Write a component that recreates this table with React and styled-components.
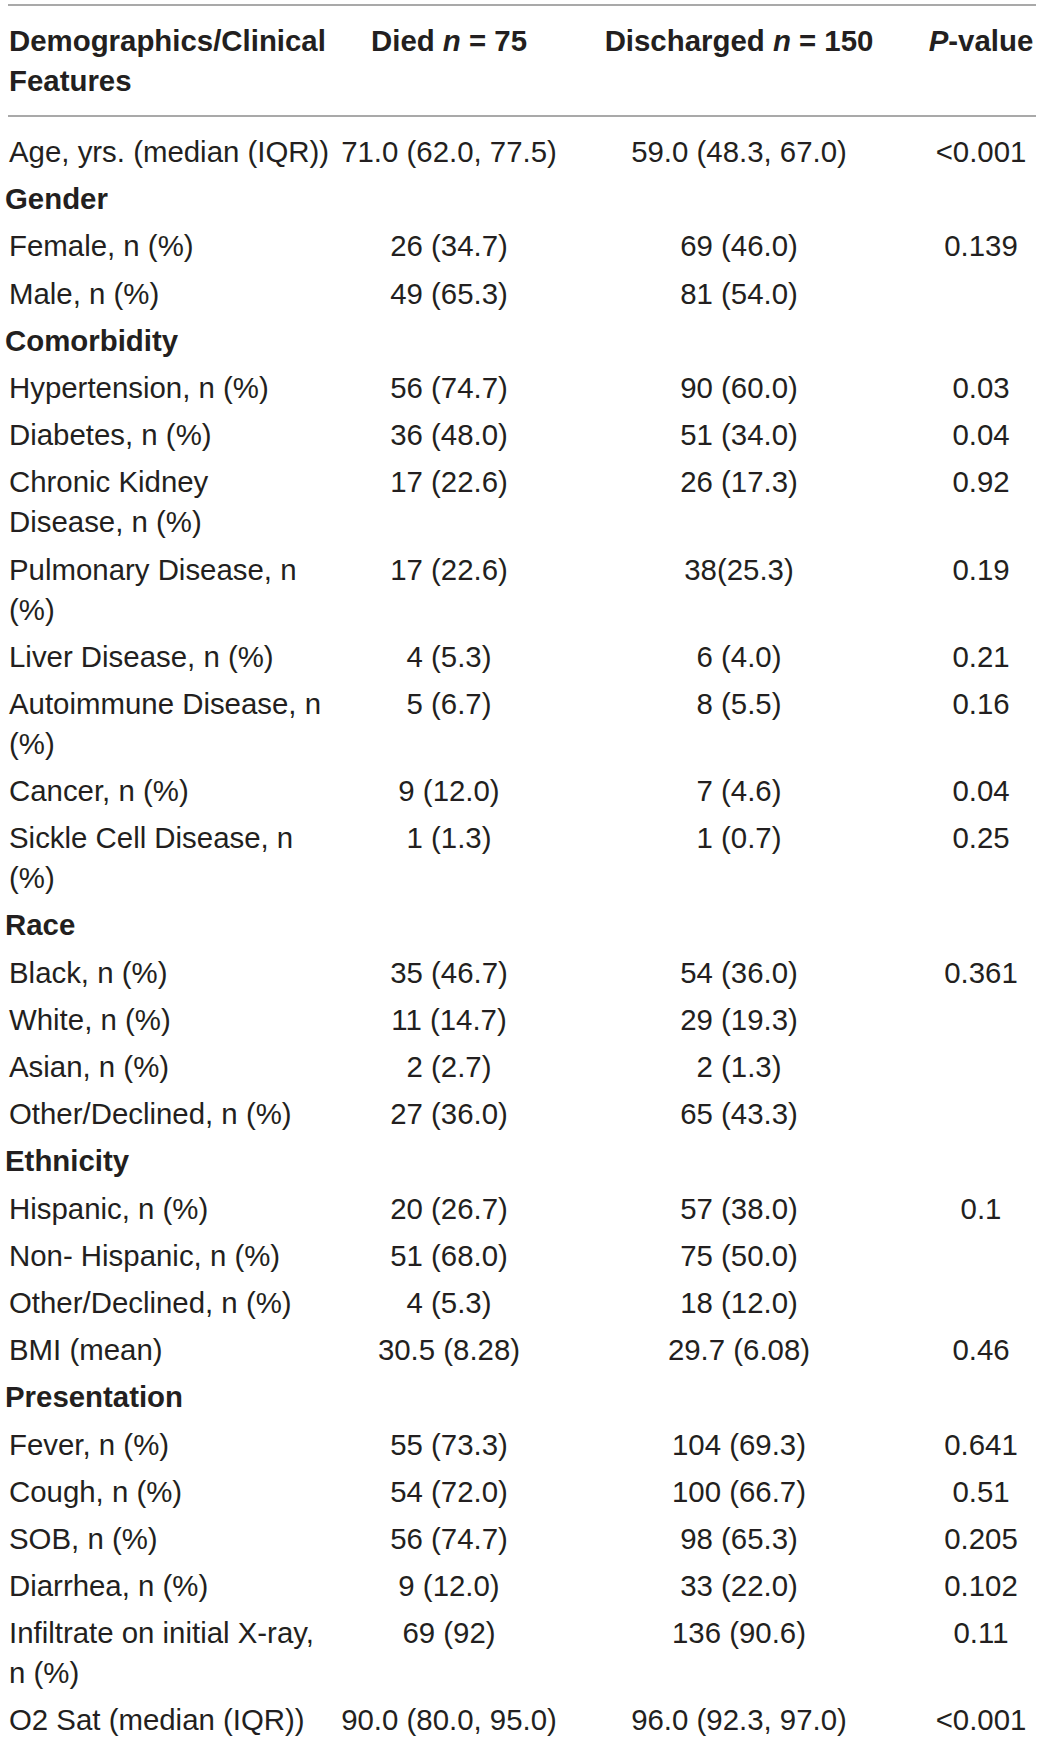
import React from "react";
import styled, { createGlobalStyle } from "styled-components";

const GlobalStyle = createGlobalStyle`
  body {
    margin: 0;
    background: #fff;
  }
`;

const Page = styled.div`
  padding: 4px 6px 0 8px;
`;

const Table = styled.table`
  width: 1028px;
  border-collapse: separate;
  border-spacing: 0;
  table-layout: fixed;
  font-family: "Liberation Sans", Arial, Helvetica, sans-serif;
  font-size: 29.4px;
  line-height: 40px;
  color: #231f20;
`;

const HeadCell = styled.th`
  font-weight: 700;
  text-align: ${(p) => (p.$left ? "left" : "center")};
  vertical-align: top;
  padding: 15px ${(p) => p.$pr || 0}px 14px ${(p) => (p.$left ? 1 : 0)}px;
  border-top: 2px solid #a9a9a9;
  border-bottom: 2px solid #a9a9a9;
  white-space: pre;
`;

const Row = styled.tr`
  &:first-child td {
    padding-top: 15px;
  }
`;

const LabelCell = styled.td`
  text-align: left;
  vertical-align: top;
  padding: 3.6px 0 3.6px 1px;
  white-space: pre;
`;

const SectionCell = styled.td`
  text-align: left;
  font-weight: 700;
  padding: 3.6px 0;
  text-indent: -3px;
  white-space: pre;
`;

const ValueCell = styled.td`
  text-align: center;
  vertical-align: top;
  padding: 3.6px ${(p) => p.$pr || 0}px 3.6px 0;
  white-space: pre;
`;

const rows = [
  ["Age, yrs. (median (IQR))", "71.0 (62.0, 77.5)", "59.0 (48.3, 67.0)", "<0.001"],
  ["Gender"],
  ["Female, n (%)", "26 (34.7)", "69 (46.0)", "0.139"],
  ["Male, n (%)", "49 (65.3)", "81 (54.0)", ""],
  ["Comorbidity"],
  ["Hypertension, n (%)", "56 (74.7)", "90 (60.0)", "0.03"],
  ["Diabetes, n (%)", "36 (48.0)", "51 (34.0)", "0.04"],
  ["Chronic Kidney\nDisease, n (%)", "17 (22.6)", "26 (17.3)", "0.92"],
  ["Pulmonary Disease, n\n(%)", "17 (22.6)", "38(25.3)", "0.19"],
  ["Liver Disease, n (%)", "4 (5.3)", "6 (4.0)", "0.21"],
  ["Autoimmune Disease, n\n(%)", "5 (6.7)", "8 (5.5)", "0.16"],
  ["Cancer, n (%)", "9 (12.0)", "7 (4.6)", "0.04"],
  ["Sickle Cell Disease, n\n(%)", "1 (1.3)", "1 (0.7)", "0.25"],
  ["Race"],
  ["Black, n (%)", "35 (46.7)", "54 (36.0)", "0.361"],
  ["White, n (%)", "11 (14.7)", "29 (19.3)", ""],
  ["Asian, n (%)", "2 (2.7)", "2 (1.3)", ""],
  ["Other/Declined, n (%)", "27 (36.0)", "65 (43.3)", ""],
  ["Ethnicity"],
  ["Hispanic, n (%)", "20 (26.7)", "57 (38.0)", "0.1"],
  ["Non- Hispanic, n (%)", "51 (68.0)", "75 (50.0)", ""],
  ["Other/Declined, n (%)", "4 (5.3)", "18 (12.0)", ""],
  ["BMI (mean)", "30.5 (8.28)", "29.7 (6.08)", "0.46"],
  ["Presentation"],
  ["Fever, n (%)", "55 (73.3)", "104 (69.3)", "0.641"],
  ["Cough, n (%)", "54 (72.0)", "100 (66.7)", "0.51"],
  ["SOB, n (%)", "56 (74.7)", "98 (65.3)", "0.205"],
  ["Diarrhea, n (%)", "9 (12.0)", "33 (22.0)", "0.102"],
  ["Infiltrate on initial X-ray,\nn (%)", "69 (92)", "136 (90.6)", "0.11"],
  ["O2 Sat (median (IQR))", "90.0 (80.0, 95.0)", "96.0 (92.3, 97.0)", "<0.001"],
];

const App = () => {
  return (
    <Page>
      <GlobalStyle />
      <Table>
        <colgroup>
          <col style={{ width: 332 }} />
          <col style={{ width: 218 }} />
          <col style={{ width: 368 }} />
          <col style={{ width: 110 }} />
        </colgroup>
        <thead>
          <tr>
            <HeadCell $left>{"Demographics/Clinical\nFeatures"}</HeadCell>
            <HeadCell>
              Died <i>n</i> = 75
            </HeadCell>
            <HeadCell $pr={6}>
              Discharged <i>n</i> = 150
            </HeadCell>
            <HeadCell>
              <i>P</i>-value
            </HeadCell>
          </tr>
        </thead>
        <tbody>
          {rows.map((r, i) =>
            r.length === 1 ? (
              <Row key={i}>
                <SectionCell colSpan={4}>{r[0]}</SectionCell>
              </Row>
            ) : (
              <Row key={i}>
                <LabelCell>{r[0]}</LabelCell>
                <ValueCell>{r[1]}</ValueCell>
                <ValueCell $pr={6}>{r[2]}</ValueCell>
                <ValueCell>{r[3]}</ValueCell>
              </Row>
            )
          )}
        </tbody>
      </Table>
    </Page>
  );
};

export default App;
